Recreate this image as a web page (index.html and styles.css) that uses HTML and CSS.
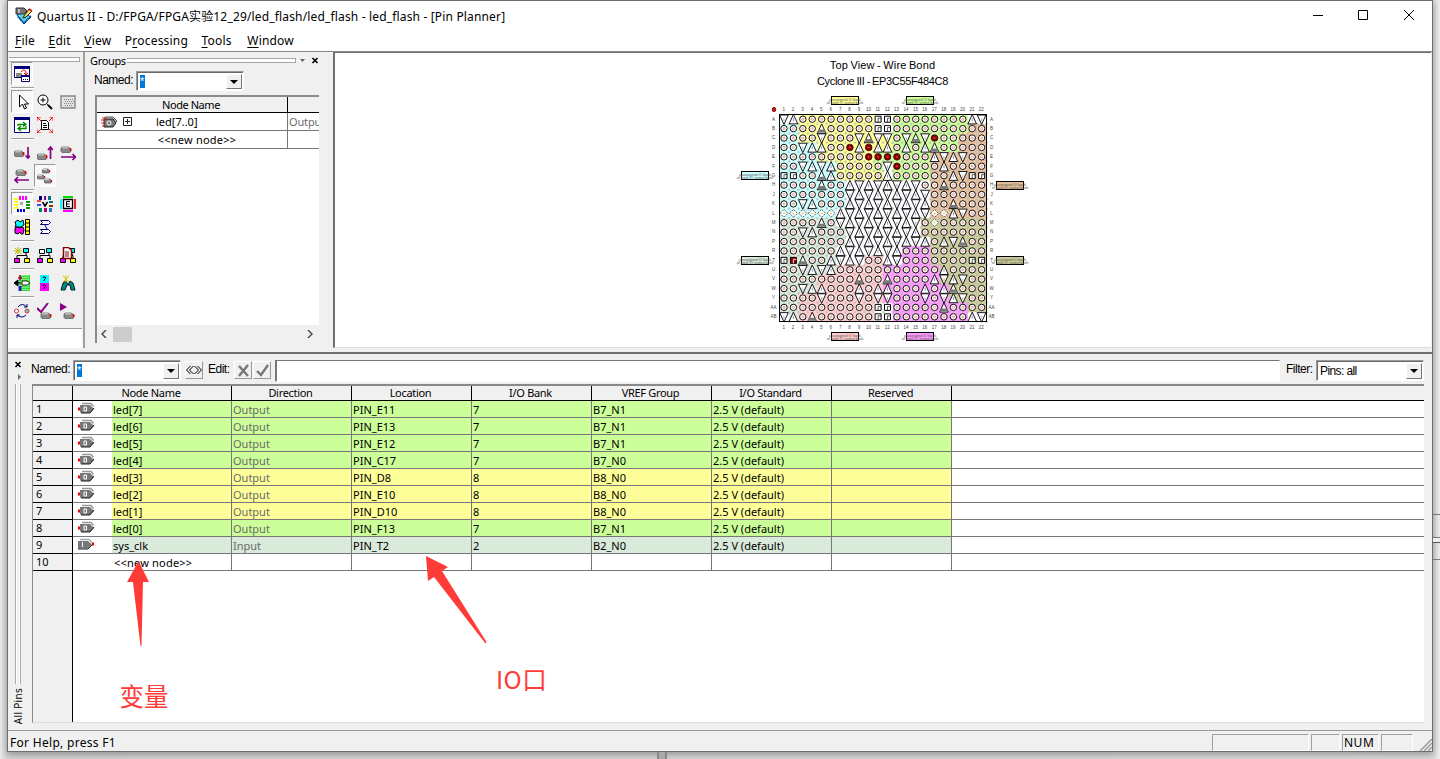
FILE: index.html
```html
<!DOCTYPE html>
<html lang="zh">
<head>
<meta charset="utf-8">
<title>Quartus II - Pin Planner</title>
<link rel="stylesheet" href="styles.css">
</head>
<body>
<div class="window">
  <header class="titlebar">
    <svg class="app-icon" width="18" height="18" viewBox="0 0 18 18"><path d="M2 8l5-3 9 5-7 7z" fill="#52d4ee" stroke="#064aa0"/><path d="M3 10l6 6 7-7" fill="none" stroke="#003080" stroke-width="2" stroke-dasharray="1 1"/><path d="M1 1h8l3 3-3 3H1z" fill="#777" stroke="#333"/><path d="M4 2v4" stroke="#fff"/><path d="M9 9l5-7 3 2-6 6-3 1z" fill="#ffdf45" stroke="#222"/><path d="M14 2l3 2" stroke="#d22" stroke-width="2"/></svg>
    <span class="title">Quartus II - D:/FPGA/FPGA实验12_29/led_flash/led_flash - led_flash - [Pin Planner]</span>
    <svg class="caption" width="110" height="14" viewBox="0 0 110 14" fill="none" stroke="#000"><path d="M3 7.500h10"/><path d="M48.500 2.500h9v9h-9z"/><path d="M94 2l10 10M104 2L94 12"/></svg>
  </header>
  <nav class="menu"><span><u>F</u>ile</span><span><u>E</u>dit</span><span><u>V</u>iew</span><span>P<u>r</u>ocessing</span><span><u>T</u>ools</span><span class="win"><u>W</u>indow</span></nav>
  <main class="upper">
    <aside class="toolside">
      <div class="toolbar">
        <div class="grip"></div>
        <div class="tools" id="tools"></div>
      </div>
      <div class="toolblank"></div>
    </aside>
    <section class="groups">
      <div class="ghead"><span>Groups</span><i class="grip flat"></i><svg width="22" height="9" viewBox="0 0 22 9"><path d="M0 3h5l-2.500 3z" fill="#666"/><path d="M12.500 2l5 5M17.500 2l-5 5" stroke="#000" stroke-width="1.600"/></svg></div>
      <div class="gname"><span class="sans">Named:</span><div class="combo"><b>*</b><i></i></div></div>
      <div class="gtable">
        <div class="grow hd"><span>Node Name</span><span></span></div>
        <div class="grow"><span class="bus"><svg class="gicon" width="17" height="13" viewBox="0 0 17 13"><path d="M4 1h8l4 4-4 4H4z" fill="#ccc" stroke="#555"/><path d="M3 3h9l3 4-3 4H3z" fill="#777" stroke="#222"/><path d="M1 2h4M0 4h4M0 7h3M1 10h3" stroke="#e22"/><circle cx="8" cy="7" r="2" fill="none" stroke="#fff"/></svg><svg class="plus" width="9" height="9"><path d="M.5.5h8v8h-8zM2 4.500h5M4.500 2v5" fill="#fff" stroke="#222"/></svg>led[7..0]</span><span class="dim">Outpu</span></div>
        <div class="grow new"><span>&lt;&lt;new node&gt;&gt;</span><span></span></div>
        <div class="gspace"></div>
        <div class="scroll"><svg width="8" height="8"><path d="M6 0L2 4l4 4" fill="none" stroke="#444" stroke-width="1.400"/></svg><i></i><svg width="8" height="8"><path d="M2 0l4 4-4 4" fill="none" stroke="#444" stroke-width="1.400"/></svg></div>
      </div>
    </section>
    <section class="chipview">
      <div class="chiptitle"><div class="view">Top View - Wire Bond</div><div>Cyclone III - EP3C55F484C8</div></div>
      <svg id="chip" width="310" height="254" viewBox="730 92 310 254"></svg>
    </section>
  </main>
  <section class="lower">
    <aside class="side"><svg width="14" height="24" viewBox="0 0 14 24"><path d="M2.500 3l5 5M7.500 3l-5 5" stroke="#000" stroke-width="1.600"/><path d="M5 15l3 3-3 3z" fill="#666"/></svg><i class="vgrip"></i><span>All Pins</span></aside>
    <div class="pins">
      <div class="editbar">
        <span class="sans">Named:</span><div class="combo"><b>*</b><i></i></div>
        <div class="btn gap"><svg width="16" height="10" viewBox="0 0 16 10" fill="none" stroke="#000"><path d="M4.500 1l-4 4 4 4M7.500 1l-4 4 4 4M8.500 1l4 4-4 4M11.500 1l4 4-4 4"/></svg></div>
        <span class="sans edit">Edit:</span>
        <div class="btn"><svg width="13" height="13" viewBox="0 0 13 13"><path d="M2 2l9 10M11 1L2 12" stroke="#777" stroke-width="2.400"/></svg></div>
        <div class="btn"><svg width="13" height="13" viewBox="0 0 13 13"><path d="M1 7l4 4 7-10" fill="none" stroke="#777" stroke-width="2.400"/></svg></div>
        <div class="field"></div>
        <span class="sans filter">Filter:</span><div class="combo"><em>Pins: all</em><i></i></div>
      </div>
      <div class="table" id="table"></div>
    </div>
  </section>
  <footer class="status"><span>For Help, press F1</span><i class="w1"></i><i class="w2"></i><i class="w3">NUM</i><i class="w4"></i><svg width="12" height="12"><path d="M0 12L12 0M4 12l8-8M8 12l4-4" stroke="#999" stroke-width="1.500"/></svg></footer>
</div>
<div class="edge-marks"></div>
<div class="bottom-mark"></div>
<svg class="notes" width="440" height="170" viewBox="110 550 440 170"><path d="M138.500 561L149 582H143L141.500 646H140.500L133 582H127zM426 556L448 567 442 571 486.500 642 485.500 643.500 434 577 428 581z" fill="#ff3b38"/><text x="119.500" y="706">变量</text><text x="496" y="689" letter-spacing=".4">IO口</text></svg>
<script src="app.js"></script>
</body>
</html>
```
FILE: styles.css
```css
* { box-sizing: border-box; }
body { margin: 0; height: 759px; overflow: hidden; position: relative; padding: 0 7px 7px; background: linear-gradient(90deg, #eaeaeb, #d2d2d3 7px, #d8d8d8 1433px, #eee 1440px); font: 11px "Noto Sans", "Noto Sans CJK SC", sans-serif; color: #000; }
i, em { font-style: normal; }
.window { height: 752px; width: 1426px; border: 1px solid #6e6e6e; background: #f0f0f0; display: flex; flex-direction: column; box-shadow: 0 2px 7px #0005; position: relative; }
.titlebar { height: 29px; background: #fff; display: flex; align-items: center; padding: 0 12px 0 7px; flex: none; }
.app-icon { margin-right: 4px; }
.title { font-size: 12px; flex: 1; white-space: nowrap; letter-spacing: .16px; }
.caption { transform: translateY(-1px); }
.menu { height: 21px; background: #fff; display: flex; gap: 13.5px; font-size: 12px; padding: 0 7px; line-height: 22px; flex: none; letter-spacing: .2px; }
.menu u { text-underline-offset: 2px; }
.menu .win { margin-left: 2px; }
.upper { height: 297px; display: flex; border-top: 1px solid #8a8a8a; flex: none; }
.toolside { width: 77px; display: flex; flex-direction: column; border-right: 2px solid #a0a0a0; padding-right: 1px; }
.toolbar { height: 277px; border-bottom: 1px solid #999; padding: 5px 2px 0 0; }
.grip { display: block; height: 5px; border: 1px solid #a6a6a6; border-width: 1px 1px 1px 0; background: #fff; margin-left: 1px; }
.toolblank { flex: 1; background: #fff; }
.tools { padding: 0 0 0 3px; }
.trow { display: grid; grid-template-columns: repeat(3, 23px); height: 23px; }
.tool { width: 22px; height: 23px; display: grid; place-items: center; }
.tool.on { background: #f8f8f8; border: 1px solid #999; border-color: #999 #fff #fff #999; }
.sep { height: 5px; width: 23px; border-top: 1px solid #a0a0a0; background: linear-gradient(#fff 1px, transparent 1px); background-clip: padding-box; transform: translateY(2px); }
.groups { width: 248px; padding: 0 0 0 5px; }
.ghead { height: 16px; display: flex; align-items: center; line-height: 15px; }
.ghead > span { letter-spacing: -.35px; width: 35px; }
.ghead .flat { flex: 0 0 169px; height: 5px; margin-left: 2px; }
.ghead svg { margin-left: 4px; }
.gname { display: flex; height: 27px; padding: 3px 0 0 4px; }
.sans { font: 12px/18px "Liberation Sans", Arial, sans-serif; letter-spacing: -.5px; }
.combo { display: flex; width: 108px; height: 21px; background: #fff; border: 1px solid #a0a0a0; border-color: #999 #fff #fff #999; box-shadow: inset 1px 1px #696969; padding: 2px 1px 1px 2px; }
.gname .sans { width: 38px; }
.gname .combo { margin-left: 4px; height: 20px; }
.combo b { background: #0078d7; color: #fff; font: 11px/12px "Liberation Sans", Arial, sans-serif; width: 5px; height: 13px; margin: 1px; }
.combo em { font: 12px/17px "Liberation Sans", Arial, sans-serif; letter-spacing: -.6px; padding-left: 1px; }
.combo i { margin-left: auto; width: 16px; background: #f0f0f0; border: 1px solid #fff; border-color: #fff #777 #777 #fff; display: grid; place-items: center; }
.combo i::after { content: ""; border: 4px solid transparent; border-top-color: #000; border-bottom: 0; }
.gtable { width: 224px; height: 248px; margin-left: 5px; border: 2px solid #8a8a8a; border-width: 2px 0 0 2px; background: #fff; overflow: hidden; display: flex; flex-direction: column; }
.grow { height: 18px; flex: none; display: grid; grid-template-columns: 191px 31px; border-bottom: 1px solid #777; line-height: 18px; text-align: center; }
.grow span { border-right: 1px solid #777; position: relative; }
.grow span + span { border: 0; text-align: left; padding-left: 1px; }
.grow.hd { height: 16px; line-height: 15px; letter-spacing: -.45px; background: #f0f0f0; border-bottom-color: #000; }
.grow.hd span { border-color: #000; padding-right: 2px; }
.grow .bus { text-align: left; padding-left: 59px; }
.grow .dim { letter-spacing: -.15px; }
.new span { padding-left: 10px !important; letter-spacing: .2px; }
.gicon { position: absolute; left: 4px; top: 3px; }
.plus { position: absolute; left: 26px; top: 4px; }
.dim { color: #6b6b6b; }
.gspace { flex: 1; }
.scroll { height: 18px; background: #f0f0f0; display: flex; align-items: center; padding: 0 5px 0 3px; }
.scroll i { width: 19px; height: 15px; background: #cdcdcd; margin: 0 auto 0 5px; }
.chipview { flex: 1; margin-right: 1px; background: #fff; border: 2px solid #6e6e6e; border-width: 1px 0 0 2px; border-bottom: 1px solid #ddd; padding: 4px 0 0 395px; overflow: hidden; }
.chiptitle { font: 11px/16px "Liberation Sans", Arial, sans-serif; width: 305px; text-align: center; height: 35px; letter-spacing: -.35px; word-spacing: -.6px; }
.chiptitle .view { letter-spacing: .15px; word-spacing: -.8px; }
#chip { display: block; }
#chip text { font-family: "Liberation Sans", Arial, sans-serif; text-anchor: middle; }
.lower { margin-top: 4px; height: 378px; border-top: 2px solid #6e6e6e; display: flex; flex: none; }
.side { width: 24px; padding: 5px 0 0 5px; display: flex; flex-direction: column; }
.vgrip { display: block; width: 6px; height: 300px; margin: 1px 0 4px 2px; border: 1px solid #aaa; border-width: 0 1px; box-shadow: inset 1px 0 #fff, inset -1px 0 #fff; }
.side span { writing-mode: vertical-rl; transform: rotate(180deg); font-size: 10px; line-height: 14px; width: 14px; white-space: nowrap; letter-spacing: .3px; margin-left: -2px; }
.pins { width: 1392px; }
.editbar { height: 30px; display: flex; align-items: flex-start; padding-top: 6px; }
.editbar .sans { width: 42px; margin-left: -1px; }
.btn { width: 18px; height: 18px; margin: 1px 1px 0 0; border: 1px solid #fff; border-color: #fff #999 #999 #fff; display: grid; place-items: center; }
.btn.gap { margin-left: 4px; }
.editbar .edit { width: 26px; margin-left: 4px; }
.field { flex: 1; height: 22px; margin-left: 3px; background: #fff; border: 1px solid #fff; border-color: #777 #fff #fff #777; box-shadow: inset 1px 0 #777; }
.editbar .filter { width: 30px; margin-left: 6px; }
.table { height: 339px; background: #fff; border: 1px solid #8a8a8a; border-width: 2px 0 0 1px; border-bottom: 1px solid #ddd; display: flex; flex-direction: column; }
.row { display: grid; grid-template: 16px / 40px 159px repeat(6, 120px) 1fr; height: 17px; border-bottom: 1px solid #777; flex: none; line-height: 18px; }
.row > span { border-right: 1px solid #777; padding-left: 1px; white-space: nowrap; }
.row > span:last-child { border: 0; }
.row > .num { background: #f0f0f0; border-right-color: #000; padding-left: 3px; box-shadow: 0 1px #000; line-height: 16px; }
.row.head { grid-template-rows: 14px; height: 15px; background: #f0f0f0; text-align: center; line-height: 14px; border-color: #000; letter-spacing: -.3px; }
.head > span { border-color: #000; padding-right: 3px; }
.row > .node { display: flex; padding-left: 0; }
.node svg { flex: none; margin: 1px 17px 0 5px; }
.node b { font-weight: 400; flex: 1; padding-left: 1px; }
.node .add { padding-left: 41px; letter-spacing: .2px; }
.g { background: #ccff99; } .y { background: #ffff99; } .t { background: #d9e9da; }
.fill { flex: 1; width: 40px; background: #f0f0f0; border-right: 1px solid #000; }
.status { flex: 1; border-top: 1px solid #999; display: flex; align-items: flex-start; font-size: 12px; line-height: 20px; padding: 2px 0 0 2px; }
.status span { flex: 1; letter-spacing: .3px; }
.status i { height: 17px; margin: 1px 2px 0 0; border: 1px solid #a0a0a0; border-color: #a0a0a0 #fff #fff #a0a0a0; line-height: 16px; }
.w1 { width: 97px; } .w2 { width: 29px; } .w3 { width: 37px; padding-left: 1px; letter-spacing: .5px; } .w4 { width: 32px; }
.status svg { margin: 6px 0 0 5px; }
.edge-marks { position: absolute; left: 1433px; top: 514px; width: 7px; height: 46px; border: 1px solid #777; border-width: 1px 0; background: linear-gradient(transparent 22px, #777 22px 23px, #eee 23px 27px, #555 27px 28px, transparent 28px); }
.bottom-mark { position: absolute; left: 657px; top: 752px; width: 10px; height: 7px; background: #aaa; border: 1px solid #888; border-width: 0 2px; }
.notes { position: absolute; left: 110px; top: 550px; overflow: visible; }
.notes text { font: 24.500px "Noto Sans CJK SC", sans-serif; fill: #ff3b38; }
```
FILE: app.js
```js
// Toolbar icons, drawn on a 16x16 grid. null starts a new toolbar section.
const pin = (x, y) => `<path d="M${x - 1} ${y + 1}l1-1h6l3 2v2l-1 1.500h-8l-1-1z" fill="#888" stroke="#555" stroke-width=".7"/><path d="M${x} ${y + .8}h6" stroke="#ddd"/><path d="M${x + 8.500} ${y + 1}v3" stroke="#e00" stroke-width="1.500"/>`;
const smallPin = (x, y) => `<path d="M${x} ${y}h5l2 2-1 2h-6l-1-1z" fill="#888" stroke="#444" stroke-width=".6"/><path d="M${x} ${y + .6}h4" stroke="#fff" stroke-width=".8"/><path d="M${x + 6.500} ${y + 1}v2" stroke="#e00" stroke-width="1.200"/>`;
const box = (x, y, f, s = '#000') => `<path d="M${x}.5 ${y}.5h5v4h-5z" fill="${f}" stroke="${s}"/>`;
const tree = box(9, 1, '#0ff') + box(0, 11, '#f0f') + box(10, 11, '#ff0') + '<path d="M12 6v3M3 11V8.500h10V11" fill="none" stroke="#000"/>';
const bars = (c) => c.map(([x, y, w, h, f]) => `<path d="M${x} ${y}h${w}v${h}h-${w}z" fill="${f}"/>`).join('');
const icons = [
  [['<path d="M.5.5h15v11H.5z" fill="#fff" stroke="#007"/><path d="M0 1.500h16" stroke="#007" stroke-width="3"/><path d="M2 7h6v4H2z" fill="#888"/><path d="M7 6q3-4 5 0v3m-2-2l2 2 2-2" fill="none" stroke="#e00"/><path d="M7.500 10.500h8v5h-8z" fill="#fff" stroke="#007"/><path d="M7 10h9" stroke="#007" stroke-width="2"/><path d="M9 13.500h5" stroke="#000" stroke-dasharray="1 1"/>', 1]],
  null,
  [['<path d="M5.500 1v12l3-3 2 5 2-1-2-4h4z" fill="#fff" stroke="#000"/>', 1], ['<circle cx="6" cy="6" r="5" fill="#fff" stroke="#000"/><path d="M3.500 6h5M6 3.500v5M9.500 9.500l2 2" stroke="#000"/><path d="M11 11l4 4" stroke="#000" stroke-width="2"/>'], ['<path d="M1 2h14v12H1z" fill="#e3e3e3" stroke="#888" stroke-width="1.400"/><path d="M4 5.500h9M5 7.500h9M4 9.500h9M5 11.500h8" stroke="#888" stroke-dasharray="1 1"/>']],
  [['<path d="M.5.500h15v15H.5z" fill="#fff" stroke="#007"/><path d="M0 1.500h16" stroke="#007" stroke-width="3"/><path d="M4 9V7.500h7M9 5l3 2.500-3 2M12 9v2.500H5M7 9l-3 2.500L7 14" fill="none" stroke="#080" stroke-width="1.300"/>'], ['<path d="M4.500 3.500h5l2 2v7h-7z" fill="#fff" stroke="#000"/><path d="M6 6.500h3M6 8.500h4M6 10.500h4" stroke="#000"/><path d="M0 4V0h4M0 0l4 4M12 0h4v4M16 0l-4 4M0 12v4h4M0 16l4-4M12 16h4v-4M16 16l-4-4" fill="none" stroke="#e00"/>']],
  null,
  [[pin(1, 6) + '<path d="M14 2v11M11.500 10.500L14 13l2.500-2.500" fill="none" stroke="#808" stroke-width="1.700"/>'], [pin(1, 9) + '<path d="M13.500 14V2M11 5l2.500-3L16 5" fill="none" stroke="#808" stroke-width="1.700"/>'], [pin(2, 2) + '<path d="M1 12h14M12.500 9l3 3-3 3" fill="none" stroke="#808" stroke-width="1.700"/>']],
  [[pin(3, 2) + '<path d="M15 12H1M4 9l-3 3 3 3" fill="none" stroke="#808" stroke-width="1.700"/>'], [smallPin(6, 1) + smallPin(1, 7) + smallPin(8, 11), 1]],
  null,
  [['<g>' + bars([[5,0,2,4,'#f0f'],[8,0,2,4,'#f0f'],[11,0,2,4,'#f0f'],[0,2,4,2,'#ff0'],[0,5,4,2,'#ff0'],[0,8,4,2,'#ff0'],[0,11,4,2,'#ff0'],[12,5,4,2,'#090'],[12,8,4,2,'#090'],[12,11,4,2,'#090'],[3,13,2,3,'#00d'],[6,13,2,3,'#00d'],[9,13,2,3,'#00d'],[6,6,3,3,'#aaa']]) + '</g>', 1], [bars([[2,0,3,4,'#007'],[7,0,2,4,'#808'],[11,0,3,4,'#077'],[0,4,4,2,'#f44'],[0,8,4,2,'#44f'],[12,5,4,2,'#077'],[12,9,4,2,'#830'],[2,12,3,4,'#085'],[7,12,3,4,'#a08'],[12,12,3,4,'#27c']]) + '<path d="M5.500 6l2.500 4 2.500-4" fill="none" stroke="#000" stroke-width="1.500"/>'], ['<path d="M3.500 3.500h9v9h-9z" fill="#fff" stroke="#000" stroke-width="1.300"/><path d="M10 5.500H6.500v5H10M6.500 8h3" fill="none" stroke="#000"/><path d="M3 1h10" stroke="#0d0" stroke-width="2"/><path d="M3 15h10" stroke="#f0f" stroke-width="2"/><path d="M1 3v10" stroke="#0ff" stroke-width="2"/><path d="M15 3v10" stroke="#e22" stroke-width="2"/>']],
  [['<path d="M1 3l3-2 2 2 3-2 1 5-3 2H1l1-2z" fill="#0ff" stroke="#000"/><path d="M1 9l2-1 3 1 3-1 1 3-1 4H7l-1-2-2 2-3-1z" fill="#f0f" stroke="#000"/><path d="M11.500.5h4v15h-4zM11 4h5M11 8h5M11 12h5" fill="#ff0" stroke="#000"/>'], ['<path d="M3.500 1.500h8l2 2-2 2h-8l2-2zM3.500 10.500h8l2 2-2 2h-8l2-2z" fill="#fff" stroke="#007"/><path d="M8 6l2 4" stroke="#00a"/>']],
  null,
  [[tree + '<path d="M1 1l6 6M7 1L1 7M4 0v7M0 4h8" stroke="#bb0"/>'], [tree + box(2, 2, '#fff')], [tree + '<path d="M3.500.5h5l3 3v8h-8z" fill="#fff" stroke="#800" stroke-width="1.500"/><path d="M5 5h4M5 7h4M5 9h4" stroke="#800"/>']],
  null,
  [['<path d="M5 0h11v16H5z" fill="#3d3"/><path d="M6 0v16M8 0v16M10 0v16M12 0v16M14 0v16" stroke="#fff" stroke-dasharray="1 1" stroke-width=".8"/><path d="M0 8l4-3v6zM4 8h3" fill="#000" stroke="#000"/><path d="M8 6h5l3 2-3 2H8z" fill="#fff" stroke="#333"/><path d="M6 0v5M4 3h4" stroke="#a04" stroke-width="1.500"/><path d="M6 11v5" stroke="#22b" stroke-width="3"/>'], ['<path d="M3 0h9v8H3z" fill="#0ff"/><path d="M3 8h9v8H3z" fill="#f0f"/><path d="M6 3q0-2 2-1t-1 3v1M6 11q0-2 2-1t-1 3v1" fill="none" stroke="#000"/>'], ['<path d="M1 15l2-7 3-2 2 4 2-4 3 2 2 7h-4l-1-5H7l-2 5z" fill="#088" stroke="#022"/><path d="M3 1l6 6M9 1L3 7M6 0v7" stroke="#cc0"/>']],
  null,
  [['<path d="M4 4q4-5 9 0M13 1v3h-3M12 12q-4 4-9 0M3 15v-3h3" fill="none" stroke="#007"/><circle cx="2.500" cy="8" r="2" fill="#fff" stroke="#c33"/><circle cx="13" cy="8" r="2" fill="#7cc" stroke="#c33"/>'], [pin(5, 10) + '<path d="M0 5l4 4 7-9" fill="none" stroke="#808" stroke-width="2"/>'], [pin(5, 10) + '<path d="M0 0l7 4-7 4z" fill="#808"/>']]
];
document.getElementById('tools').innerHTML = icons.map(r => r ? '<div class="trow">' + r.map(([d, on]) => `<div class="tool${on ? ' on' : ''}"><svg width="16" height="16" viewBox="0 0 16 16">${d}</svg></div>`).join('') + '</div>' : '<div class="sep"></div>').join('');

// Pin assignments
const pins = [
  ['led[7]', 'Output', 'PIN_E11', 7, 'B7_N1', 'g'], ['led[6]', 'Output', 'PIN_E13', 7, 'B7_N1', 'g'],
  ['led[5]', 'Output', 'PIN_E12', 7, 'B7_N1', 'g'], ['led[4]', 'Output', 'PIN_C17', 7, 'B7_N0', 'g'],
  ['led[3]', 'Output', 'PIN_D8', 8, 'B8_N0', 'y'], ['led[2]', 'Output', 'PIN_E10', 8, 'B8_N0', 'y'],
  ['led[1]', 'Output', 'PIN_D10', 8, 'B8_N0', 'y'], ['led[0]', 'Output', 'PIN_F13', 7, 'B7_N1', 'g'],
  ['sys_clk', 'Input', 'PIN_T2', 2, 'B2_N0', 't']
];
const outIcon = '<svg width="17" height="13" viewBox="0 0 17 13"><path d="M4 1.500h9l2.500 3" fill="none" stroke="#999" stroke-width="1.600"/><path d="M2 3h10l4 4-4 4H3l-1-1z" fill="#777"/><path d="M3 11h9l4-5" fill="none" stroke="#222"/><path d="M0 7h2" stroke="#e00" stroke-width="3"/><path d="M6 5h2.500v4H6z" fill="none" stroke="#fff"/></svg>';
const inIcon = '<svg width="17" height="13" viewBox="0 0 17 13"><path d="M2 1.500h9l3 3" fill="none" stroke="#aaa" stroke-width="1.600"/><path d="M0 3h10l4 3.500-4 4H0z" fill="#777"/><path d="M0 11h10l4-4" fill="none" stroke="#222"/><path d="M14 6h2" stroke="#e00" stroke-width="3"/><path d="M4.500 4v5" stroke="#fff"/></svg>';
const cell = (t, c = '') => `<span class="${c}">${t}</span>`;
let rows = '<div class="row head">' + ['', 'Node Name', 'Direction', 'Location', 'I/O Bank', 'VREF Group', 'I/O Standard', 'Reserved', ''].map(t => cell(t)).join('') + '</div>';
pins.forEach(([n, d, l, b, v, c], i) => {
  rows += `<div class="row">${cell(i + 1, 'num')}<span class="node">${d === 'Input' ? inIcon : outIcon}<b class="${c}">${n}</b></span>${cell(d, 'dim ' + c)}${cell(l, c)}${cell(b, c)}${cell(v, c)}${cell('2.5 V (default)', c)}${cell('', c)}<span></span></div>`;
});
rows += '<div class="row">' + cell(10, 'num') + '<span class="node"><b class="add">&lt;&lt;new node&gt;&gt;</b></span>' + '<span></span>'.repeat(7) + '</div><div class="fill"></div>';
document.getElementById('table').innerHTML = rows;

// Package view: bank colours and pin shapes, row by row
const fills = { Y: '#ffff99', G: '#ccff99', C: '#ccffff', O: '#e6be99', K: '#cccc99', M: '#ff99ff', P: '#ffcccc', T: '#d9e9da', W: '#fff' };
const names = 'A B C D E F G H J K L M N P R T U V W Y AA AB'.split(' ');
const banks = ['WWYYYYYYYYWWGGGGGGGGWW', 'CCYYYYYYYYWWGGGGGGGGOO', 'CCYYYYYYYYYYGGGGGGGOOO', 'CCCCYYYYYYYYGGGGGGGOOO', 'CCCCYYYYYYGGGGGGOOOOOO', 'CCCCCCYYYYGWGGGGOOOOOO', 'CCCCCCYYYYYWGGGGOOOOOO', 'CCCCCCCWWWWWWWWWOOOOOO', 'CCCCCCCWWWWWWWWWOOOOOO', 'CCCCCCCWWWWWWWWWOOOOOO', 'CCCCCCWWWWWWWWWWOOOOOO', 'TTTTTTWWWWWWWWWKKKKKKK', 'TTTTTTTWWWWWWWWKKKKKKK', 'TTTTTTTWWWWWWWWWKKKKKK', 'TTTTTTWWWWWWWMMMKKKKKK', 'TTTTTTWWWPPWWMMMKKKKKK', 'TTTTTTPPPPPMMMMMMKKKKK', 'TTTTPPPPPPPMMMMMMKKKKK', 'TTTTPPPPPPPMMMMMMMKKKK', 'TTPPPPPPPPPMMMMMMMKKKK', 'TTPPPPPPPPWWMMMMMMMMKK', 'WTPPPPPPPPWWMMMMMMMMWW'];
const shapes = ['v^oooooooossoooooooo^v', 'oooogooooossoooooooooo', 'oooovooovgvvovgvrooooo', 'oov^^oor^r^^o^o^gooooo', 'ooooooooorrrrooo^v^voo', 'oov^v^ooooovroooo^oooo', 'ssoog^ooooo^oooooo^vss', 'oooogooLLLLLLLLoogoooo', 'oooooooLLLLLLLLLoooooo', 'oov^oooLLLLLLLLLoogooo', 'ddddddLLLLLLLLLLdd^voo', 'oooogoLLLLLLLLLodooooo', 'oov^oooLLLLLLLLooooooo', 'oooooooLLLLLLLLLo^vgoo', 'ooooooLLLLLLLooooooooo', 'sRgoo^LLLooLLooooooo' + 'ss', 'oov^v^ooooooooooo^oooo', 'oooooooogoogoooo^v^voo', 'oov^^ooo^o^^ooo^o^gooo', 'oooovooovovvooovov^voo', 'oooooooooossooooogoooo', 'v^ogoooooossoooooooo^v'];
const P = 9.41, X0 = 779.700, Y0 = 114.500;
let out = '', marks = '';
names.forEach((name, r) => {
  for (let c = 0; c < 22; c++) {
    const x = X0 + c * P, y = Y0 + r * P, cx = x + P / 2 - .4, cy = y + P / 2;
    let s = shapes[r][c];
    out += `<rect x="${x}" y="${y}" width="9.600" height="9.600" fill="${fills[banks[r][c]]}"/>`;
    marks += `<path d="M${x + 8} ${y + P}h2.800M${x + P} ${y + 8}v2.800" stroke="#bbb" stroke-width=".8"/>`;
    if (s === 'L') s = (r + c) % 2 ? 'v' : '^';
    const up = (f) => `<path d="M${cx - 4.300} ${y + 9.400}L${cx} ${y}L${cx + 4.300} ${y + 9.400}z" fill="${f}" stroke="#000" stroke-width=".9"/>`;
    const down = `<path d="M${cx - 4.300} ${y + .5}L${cx} ${y + 10}L${cx + 4.300} ${y + .5}z" fill="#fff" stroke="#000" stroke-width=".9"/>`;
    const tick = (col) => `<path d="M${cx} ${cy - 1}v3" stroke="${col}" stroke-width=".8"/>`;
    if (s === 'o') marks += `<circle cx="${cx}" cy="${cy}" r="3.200" fill="#fff" stroke="#111" stroke-width="1"/><circle cx="${cx}" cy="${cy}" r="1.100" fill="#fdd" stroke="#e59a8c" stroke-width=".8"/>`;
    if (s === 'd') marks += `<path d="M${cx - 4} ${cy}l4-4 4 4-4 4z" fill="#fff" stroke="#333" stroke-width=".8" stroke-dasharray="2 1"/><path d="M${cx - 1} ${cy}h2" stroke="#cb4"/>`;
    if (s === 'r') marks += `<circle cx="${cx}" cy="${cy}" r="3.300" fill="#900" stroke="#200" stroke-width=".8"/><path d="M${cx - 1} ${cy}h2" stroke="#d55"/>`;
    if (s === '^') marks += up('#fff') + tick('#77c');
    if (s === 'v') marks += down + tick('#99b');
    if (s === 'g') marks += up('#fff') + `<path d="M${cx - 3} ${cy + 1}h6l1.500 3h-9z" fill="#777"/>`;
    if (s === 's' || s === 'R') marks += `<path d="M${cx - 3} ${cy - 3}h6v6h-6z" fill="${s === 'R' ? '#900' : '#fff'}" stroke="#000"/><path d="M${cx} ${cy + 3}v-4h3" fill="none" stroke="${s === 'R' ? '#fff' : '#333'}" stroke-width=".8"/>`;
  }
  const ty = Y0 + r * P + 6;
  marks += `<text x="773.500" y="${ty}" font-size="4.500" fill="#444">${name}</text><text x="991.500" y="${ty}" font-size="4.500" fill="#444">${name}</text>`;
  const tx = X0 + r * P + 4;
  marks += `<text x="${tx}" y="111" font-size="4.500" fill="#444">${r + 1}</text><text x="${tx}" y="329" font-size="4.500" fill="#444">${r + 1}</text>`;
});
out += marks + '<rect x="779.500" y="114.500" width="207" height="207" fill="none" stroke="#000"/><ellipse cx="774" cy="109.500" rx="1.800" ry="2.200" fill="#e00" stroke="#200" stroke-width=".6"/>';
[[831, 96, 'Y'], [906, 96, 'G'], [831, 332, 'P'], [906, 332, 'M'], [741, 171, 'C'], [741, 256, 'T'], [996, 181, 'O'], [996, 256, 'K']].forEach(([x, y, f]) => {
  out += `<rect x="${x + .5}" y="${y + .5}" width="27" height="8" fill="${fills[f]}" stroke="#000"/><g font-size="3.600" fill="#555"><text x="${x + 14}" y="${y + 5}">unassigned IO bank</text><text x="${x + 14}" y="${y + 8}">of bank IO output bank</text></g>`;
});
document.getElementById('chip').innerHTML = out;
```
